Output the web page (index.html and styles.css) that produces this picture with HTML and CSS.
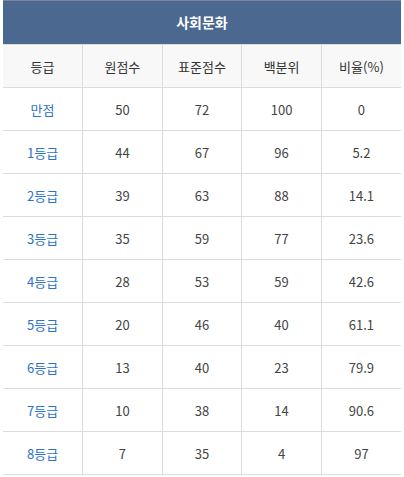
FILE: index.html
```html
<!DOCTYPE html>
<html lang="ko">
<head>
<meta charset="utf-8">
<link rel="stylesheet" href="styles.css">
</head>
<body>
<div class="wrap">
  <div class="title">사회문화</div>
  <table class="grade">
    <thead>
      <tr><th>등급</th><th>원점수</th><th>표준점수</th><th>백분위</th><th>비율(%)</th></tr>
    </thead>
    <tbody>
      <tr><td class="g">만점</td><td>50</td><td>72</td><td>100</td><td>0</td></tr>
      <tr><td class="g">1등급</td><td>44</td><td>67</td><td>96</td><td>5.2</td></tr>
      <tr><td class="g">2등급</td><td>39</td><td>63</td><td>88</td><td>14.1</td></tr>
      <tr><td class="g">3등급</td><td>35</td><td>59</td><td>77</td><td>23.6</td></tr>
      <tr><td class="g">4등급</td><td>28</td><td>53</td><td>59</td><td>42.6</td></tr>
      <tr><td class="g">5등급</td><td>20</td><td>46</td><td>40</td><td>61.1</td></tr>
      <tr><td class="g">6등급</td><td>13</td><td>40</td><td>23</td><td>79.9</td></tr>
      <tr><td class="g">7등급</td><td>10</td><td>38</td><td>14</td><td>90.6</td></tr>
      <tr><td class="g">8등급</td><td>7</td><td>35</td><td>4</td><td>97</td></tr>
    </tbody>
  </table>
</div>
</body>
</html>
```
FILE: styles.css
```css
html, body { margin: 0; padding: 0; background: #fff; }
body { font-family: "Noto Sans CJK KR", "Noto Sans", sans-serif; }
.wrap { width: 398px; margin: 0 0 0 3px; }
.title {
  height: 43px;
  border-top: 1px solid #7c8796;
  background: #4b6891;
  color: #fff;
  font-weight: bold;
  font-size: 14px;
  line-height: 43px;
  text-align: center;
}
.grade { width: 398px; border-collapse: collapse; table-layout: fixed; }
.grade th, .grade td {
  height: 42px;
  padding: 0;
  text-align: center;
  font-size: 13px;
  border-bottom: 1px solid #dcdcdc;
  border-left: 1px solid #dcdcdc;
  color: #444;
}
.grade th:first-child, .grade td:first-child { border-left: none; }
.grade th { background: #f8f8f8; font-weight: normal; color: #333; border-top: 1px solid #dcdcdc; }
.grade td.g { color: #2b73c9; }
```
